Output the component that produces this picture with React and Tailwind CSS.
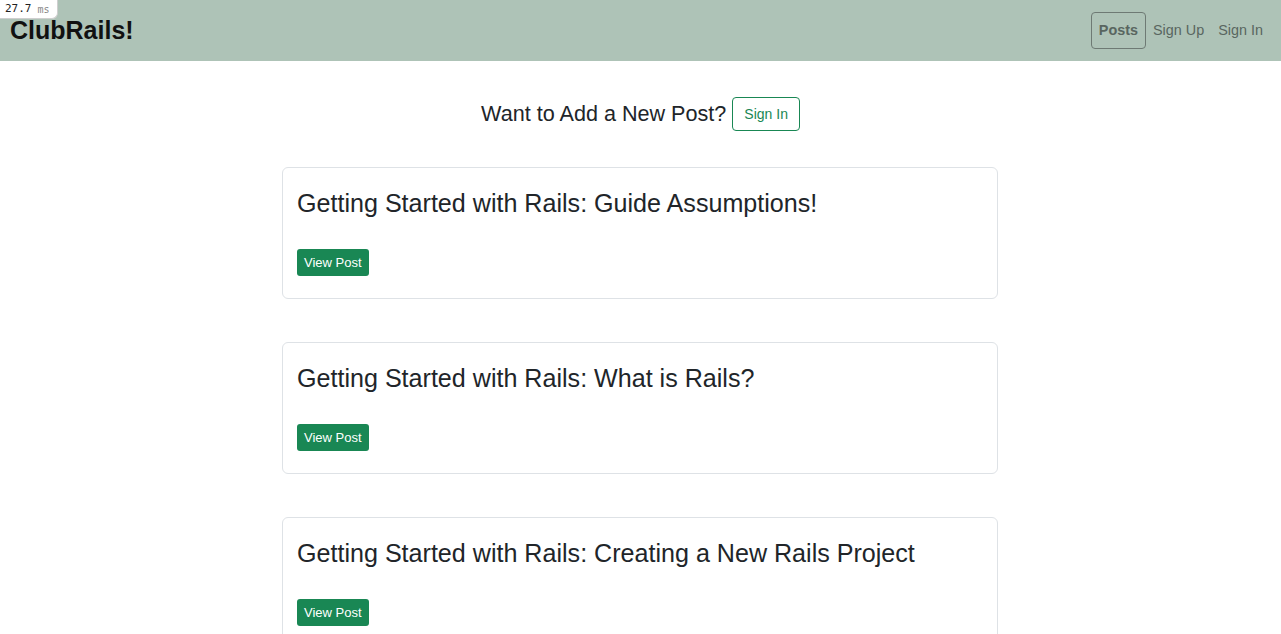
import React from 'react';

const posts = [
  'Getting Started with Rails: Guide Assumptions!',
  'Getting Started with Rails: What is Rails?',
  'Getting Started with Rails: Creating a New Rails Project',
];

function PostCard({ title }) {
  return (
    <div className="border border-[#dee2e6] rounded-[6px] bg-white px-[14px] pt-[20px] pb-[22px]">
      <h3 className="text-[25.1px] leading-[30px] text-[#212529] font-normal">{title}</h3>
      <button className="mt-[31px] h-[27px] px-[7px] bg-[#198754] text-white text-[13px] rounded-[3px]">
        View Post
      </button>
    </div>
  );
}

export default function App() {
  return (
    <div className="min-h-screen bg-white font-['Liberation_Sans',Arial,sans-serif] text-[#212529]">
      {/* profiler badge */}
      <div className="absolute top-0 left-0 z-10 h-[19px] w-[58px] bg-white border-r border-b border-[#cfcfcf] rounded-br-[6px] flex items-center pl-[5px] font-['DejaVu_Sans_Mono',monospace] text-[11px] text-[#222]">
        27.7 <span className="ml-[6px] text-[10px] text-[#888]">ms</span>
      </div>

      <nav className="h-[61px] bg-[#aec3b7] flex items-center justify-between pl-[10px] pr-[18px]">
        <a className="text-[25px] font-bold text-[#111] pt-[1px]">ClubRails!</a>
        <div className="flex items-center text-[14.4px] text-[#596660]">
          <a className="h-[37px] px-[7px] flex items-center border border-[#6e7a74] rounded-[4px] font-bold">Posts</a>
          <a className="ml-[7px]">Sign Up</a>
          <a className="ml-[14px]">Sign In</a>
        </div>
      </nav>

      <div className="flex items-center justify-center gap-[6px] mt-[36px]">
        <h5 className="text-[21.6px] text-[#212529]">Want to Add a New Post?</h5>
        <button className="h-[34px] px-[11px] border border-[#198754] text-[#198754] text-[14px] rounded-[4px] bg-white">
          Sign In
        </button>
      </div>

      <div className="w-[716px] ml-[282px] mt-[36px] flex flex-col gap-[43px]">
        {posts.map((p) => (
          <PostCard key={p} title={p} />
        ))}
      </div>
    </div>
  );
}
